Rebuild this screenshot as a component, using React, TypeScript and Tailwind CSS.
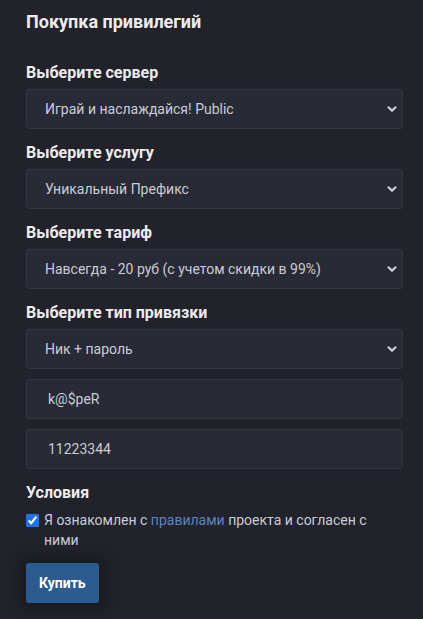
import { ChevronDown } from "lucide-react"

type Option = { label: string; value: string }

function SelectField({ label, value }: { label: string; value: string }) {
  return (
    <div className="flex flex-col">
      <label className="mb-[6px] text-[16px] font-bold leading-[20px] text-[#ececf0]">{label}</label>
      <div className="relative">
        <select
          defaultValue={value}
          className="h-10 w-full appearance-none rounded-[3px] border border-[#34363f] bg-[#282a35] pl-[18px] pr-8 text-[14px] text-[#c9ccd8] outline-none"
        >
          <option value={value}>{value}</option>
        </select>
        <ChevronDown
          className="pointer-events-none absolute right-[4px] top-1/2 h-[14px] w-[14px] -translate-y-1/2 text-[#d4d6e0]"
          strokeWidth={3.5}
        />
      </div>
    </div>
  )
}

function TextField({ value }: { value: string }) {
  return (
    <input
      defaultValue={value}
      className="h-10 w-full rounded-[3px] border border-[#34363f] bg-[#282a35] pl-[21px] text-[14px] text-[#c9ccd8] outline-none"
    />
  )
}

const fields: Option[] = [
  { label: "Выберите сервер", value: "Играй и наслаждайся! Public" },
  { label: "Выберите услугу", value: "Уникальный Префикс" },
  { label: "Выберите тариф", value: "Навсегда - 20 руб (с учетом скидки в 99%)" },
]

export default function App() {
  return (
    <div
      className="min-h-[619px] bg-[#22222b] pl-[26px] pr-[20px] pt-[8px] pb-4"
      style={{ fontFamily: "Roboto, 'Liberation Sans', sans-serif" }}
    >
      <h1 className="text-[18px] font-bold leading-[28px] text-[#ececf0]">Покупка привилегий</h1>

      <div className="mt-[27px] flex flex-col gap-[14px]">
        {fields.map((f) => (
          <SelectField key={f.label} label={f.label} value={f.value} />
        ))}
        <div className="flex flex-col gap-[10px]">
          <SelectField label="Выберите тип привязки" value="Ник + пароль" />
          <TextField value="k@$peR" />
          <TextField value="11223344" />
        </div>
      </div>

      <div className="mt-[12px]">
        <div className="text-[16px] font-bold leading-[24px] text-[#ececf0]">Условия</div>
        <label className="mt-[5px] flex items-start gap-[5px] text-[14px] leading-[20px] text-[#c9ccd8]">
          <input type="checkbox" defaultChecked className="mt-[4px] h-[13px] w-[13px] accent-[#1a73e8]" />
          <span>
            Я ознакомлен с <a href="#" className="text-[#5885c4]">правилами</a> проекта и согласен с ними
          </span>
        </label>
      </div>

      <button className="mt-[13px] h-10 rounded-[3px] bg-[#2c5b90] px-[13px] text-[14px] font-bold text-white shadow-[0_0_12px_6px_rgba(20,20,26,0.6)]">
        Купить
      </button>
    </div>
  )
}
